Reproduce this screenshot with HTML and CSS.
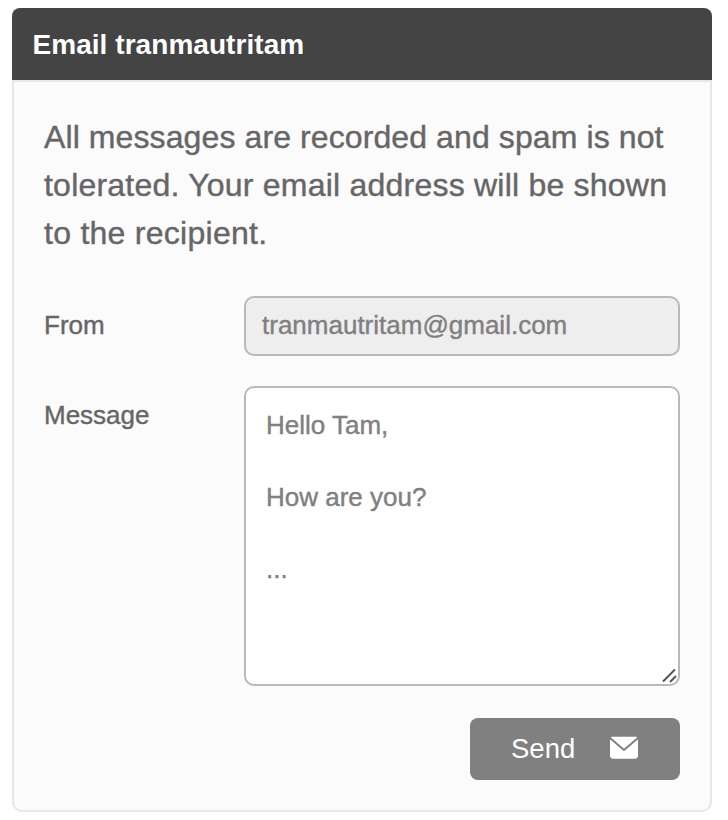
FILE: index.html
```html
<!DOCTYPE html>
<html lang="en">
<head>
<meta charset="utf-8">
<title>Email tranmautritam</title>
<link rel="stylesheet" href="styles.css">
</head>
<body>
<section class="card">
  <h1 class="card-title">Email tranmautritam</h1>
  <form class="card-body">
    <p class="notice"><span class="line-one">All messages are recorded and spam is not</span> <span class="line-two">tolerated. Your email address will be shown</span> <span class="line-three">to the recipient.</span></p>
    <div class="row">
      <label class="label" for="from">From</label>
      <input class="field" id="from" type="text" value="tranmautritam@gmail.com" readonly>
    </div>
    <div class="row">
      <label class="label" for="message">Message</label>
      <div class="area-wrap">
        <textarea class="area" id="message" spellcheck="false">Hello Tam,

How are you?

...</textarea>
        <svg class="grip" width="16" height="16" viewBox="0 0 16 16"><path d="M1 13.500 13 1.500M8 14 14 8"/></svg>
      </div>
    </div>
    <button class="send" type="button">
      <span class="send-text">Send</span>
      <svg class="mail" width="30" height="24" viewBox="0 0 30 24"><path class="mail-body" d="M2.500 .8H27.500L29 3.500V20.500L27 22.800H3L1 20.500V3.500Z"/><path class="mail-fold" d="M1 2 15 14 29 2"/></svg>
    </button>
  </form>
</section>
</body>
</html>
```
FILE: styles.css
```css
* { box-sizing: border-box; }
body {
  margin: 0;
  padding: 8px 16px 8px 12px;
  background: #fff;
  color: #666;
  font-family: "Liberation Sans", Arial, sans-serif;
  font-size: 26px;
}
.card { height: 804px; }
.card-title {
  height: 72px;
  margin: 0;
  padding: 1px 0 0 20.5px;
  border-radius: 8px 8px 0 0;
  background: #444;
  color: #fff;
  font-size: 28px;
  letter-spacing: 0.05px;
  line-height: 72px;
}
.card-body {
  height: 732px;
  padding: 31px 30px 30px;
  border: 2px solid #e1e8ee;
  border-radius: 0 0 10px 10px;
  background: #fbfbfb;
}
.notice {
  margin: 0 0 39px;
  font-size: 32px;
  line-height: 48px;
  white-space: nowrap;
  -webkit-text-stroke: 0.4px;
}
.notice span { display: block; }
.line-one { letter-spacing: 0.1px; }
.line-two { letter-spacing: 0.22px; }
.line-three { letter-spacing: 0.27px; }
.row { display: flex; margin-bottom: 30px; }
.label {
  width: 200px;
  flex: none;
  line-height: 58px;
  -webkit-text-stroke: 0.4px;
}
.field, .area {
  display: block;
  width: 436px;
  margin: 0;
  border: 2px solid #b9b9b9;
  border-radius: 10px;
  outline: 0;
  color: #808080;
  font: inherit;
  -webkit-text-stroke: 0.4px;
}
.field { height: 60px; padding: 0 16px 2px; background: #eee; }
.area-wrap { position: relative; }
.area {
  height: 300px;
  padding: 19px 20px 17px;
  background: #fff;
  line-height: 36px;
  resize: none;
  overflow: hidden;
}
.grip {
  position: absolute;
  right: 2px;
  bottom: 2px;
  fill: none;
  stroke: #555;
  stroke-width: 2;
}
.send {
  display: flex;
  align-items: center;
  width: 210px;
  height: 62px;
  margin: 32px 0 0 auto;
  padding: 0 41px 2px;
  border: 0;
  border-radius: 8px;
  background: #808080;
  color: #fff;
  font: inherit;
  font-size: 27.5px;
}
.send-text { padding-top: 2px; }
.mail { margin-left: auto; fill: #fff; }
.mail-fold { fill: none; stroke: #808080; stroke-width: 2; }
```
